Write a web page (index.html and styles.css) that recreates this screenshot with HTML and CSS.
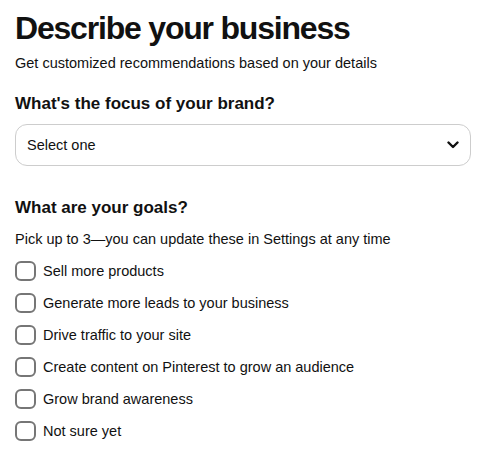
FILE: index.html
```html
<!DOCTYPE html>
<html lang="en">
<head>
<meta charset="utf-8">
<link rel="stylesheet" href="styles.css">
</head>
<body>
<main class="page">
  <h1 class="title">Describe your business</h1>
  <p class="subtitle">Get customized recommendations based on your details</p>

  <h2 class="section-title focus-title">What's the focus of your brand?</h2>
  <div class="select">
    <span class="select-text">Select one</span>
    <svg class="chevron" width="12" height="8" viewBox="0 0 12 8"><path d="M1.5 1.5 L6 6 L10.5 1.5" fill="none" stroke="#111" stroke-width="2.4" stroke-linecap="round" stroke-linejoin="round"/></svg>
  </div>

  <h2 class="section-title goals-title">What are your goals?</h2>
  <p class="hint">Pick up to 3—you can update these in Settings at any time</p>

  <ul class="options">
    <li class="option"><span class="box"></span><span class="label">Sell more products</span></li>
    <li class="option"><span class="box"></span><span class="label">Generate more leads to your business</span></li>
    <li class="option"><span class="box"></span><span class="label">Drive traffic to your site</span></li>
    <li class="option"><span class="box"></span><span class="label">Create content on Pinterest to grow an audience</span></li>
    <li class="option"><span class="box"></span><span class="label">Grow brand awareness</span></li>
    <li class="option"><span class="box"></span><span class="label">Not sure yet</span></li>
  </ul>
</main>
</body>
</html>
```

FILE: styles.css
```css
html, body {
  margin: 0;
  padding: 0;
  background: #fff;
}
body {
  font-family: "Liberation Sans", Arial, sans-serif;
  color: #111;
}
.page {
  padding: 8px 27px 0 15px;
  display: flex;
  flex-direction: column;
}
.title {
  margin: 0;
  font-size: 32px;
  font-weight: 700;
  line-height: 40px;
  letter-spacing: -1.2px;
}
.subtitle {
  margin: 5px 0 0;
  font-size: 14.5px;
  line-height: 20px;
}
.section-title {
  margin: 0;
  font-size: 17px;
  font-weight: 700;
  line-height: 22px;
}
.focus-title {
  margin-top: 20px;
}
.select {
  margin-top: 9px;
  height: 42px;
  box-sizing: border-box;
  border: 1.5px solid #cdcdcd;
  border-radius: 12px;
  display: flex;
  align-items: center;
  justify-content: space-between;
  padding: 0 11px 0 11px;
}
.select-text {
  font-size: 14.5px;
}
.chevron {
  display: block;
}
.goals-title {
  margin-top: 31px;
}
.hint {
  margin: 10px 0 0;
  font-size: 14.5px;
  line-height: 20px;
}
.options {
  list-style: none;
  margin: 12px 0 0;
  padding: 0;
  display: flex;
  flex-direction: column;
  gap: 12px;
}
.option {
  display: flex;
  align-items: center;
  gap: 7px;
  height: 20px;
}
.box {
  width: 21px;
  height: 20px;
  box-sizing: border-box;
  border: 2px solid #767676;
  border-radius: 6px;
  flex: none;
}
.label {
  font-size: 14.5px;
  line-height: 20px;
}
```
